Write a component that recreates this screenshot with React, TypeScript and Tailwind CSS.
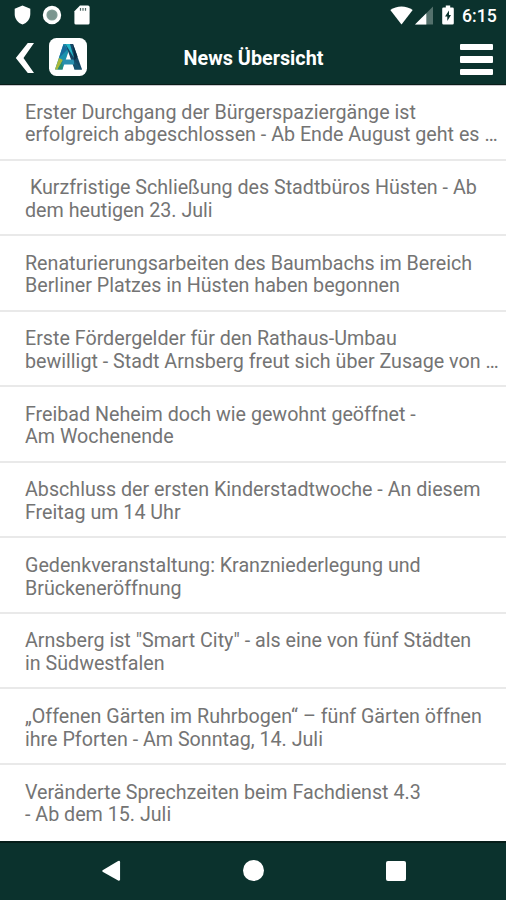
interface NewsItem {
    first: string;
    second: string;
}

const news: NewsItem[] = [
    { first: 'Erster Durchgang der Bürgerspaziergänge ist', second: 'erfolgreich abgeschlossen - Ab Ende August geht es …' },
    { first: ' Kurzfristige Schließung des Stadtbüros Hüsten - Ab', second: 'dem heutigen 23. Juli' },
    { first: 'Renaturierungsarbeiten des Baumbachs im Bereich', second: 'Berliner Platzes in Hüsten haben begonnen' },
    { first: 'Erste Fördergelder für den Rathaus-Umbau', second: 'bewilligt - Stadt Arnsberg freut sich über Zusage von …' },
    { first: 'Freibad Neheim doch wie gewohnt geöffnet -', second: 'Am Wochenende' },
    { first: 'Abschluss der ersten Kinderstadtwoche - An diesem', second: 'Freitag um 14 Uhr' },
    { first: 'Gedenkveranstaltung: Kranzniederlegung und', second: 'Brückeneröffnung' },
    { first: 'Arnsberg ist "Smart City" - als eine von fünf Städten', second: 'in Südwestfalen' },
    { first: '„Offenen Gärten im Ruhrbogen“ – fünf Gärten öffnen', second: 'ihre Pforten - Am Sonntag, 14. Juli' },
    { first: 'Veränderte Sprechzeiten beim Fachdienst 4.3', second: '- Ab dem 15. Juli' },
];

function StatusBar() {
    return (
        <div className="flex h-[30px] items-center justify-between pl-[14px] pr-[9px]">
            <div className="flex items-center">
                <svg className="h-[20px] w-[17px]" viewBox="0 0 17 20" fill="#fff">
                    <path d="M8.5 0.5 16.3 3.8V9c0 5-3.2 9-7.8 10.5C3.9 18 .7 14 .7 9V3.8Z" />
                </svg>
                <svg className="ml-[11px] h-[20px] w-[20px]" viewBox="0 0 20 20">
                    <circle cx="10" cy="10" r="7.4" fill="#85a09a" stroke="#fff" strokeWidth="3.6" />
                    <circle cx="10" cy="10" r="4.6" fill="#7b9690" />
                </svg>
                <svg className="ml-[12px] h-[20px] w-[16px]" viewBox="0 0 16 20">
                    <path d="M6 .5h8a1.6 1.6 0 0 1 1.6 1.6v15.8a1.6 1.6 0 0 1-1.6 1.6H2a1.6 1.6 0 0 1-1.6-1.6V6.2Z" fill="#fff" />
                    <path d="M6.5 3v2.8M9 3v2.8M11.5 3v2.8" stroke="#4d6662" strokeWidth="1.2" />
                </svg>
            </div>
            <div className="flex items-center">
                <svg className="h-[19px] w-[23px]" viewBox="0 0 23 19" fill="#fff">
                    <path d="M.3 4C6.5-.7 16.5-.7 22.7 4L11.5 18.5Z" />
                </svg>
                <svg className="ml-[2px] h-[19px] w-[18px]" viewBox="0 0 18 19">
                    <path d="M18 .5V18.5H0Z" fill="#54716c" />
                    <path d="M11.3 7.2V18.5H0Z" fill="#fff" />
                </svg>
                <svg className="ml-[9px] h-[20px] w-[12px]" viewBox="0 0 12 20">
                    <path d="M3.8 .5h4.4v2H10.5q1.3 0 1.3 1.3v14.4q0 1.3-1.3 1.3h-9Q.2 19.5.2 18.2V3.8Q.2 2.5 1.5 2.5h2.3Z" fill="#fff" />
                    <path d="M7 5.5 3 11.5h2.3v4.5L9 10H7Z" fill="#0b322d" />
                </svg>
                <span className="ml-[8px] w-[35px] whitespace-nowrap pt-px text-[17.7px] font-medium leading-[30px]">6:15</span>
            </div>
        </div>
    );
}

function ArnsbergLogo() {
    return (
        <svg className="h-[38px] w-[38px]" viewBox="0 0 38 38">
            <rect width="38" height="38" rx="7.5" fill="#fff" />
            <path d="M14.5 6h7.5L13.5 31.5H6Z" fill="#1a91ad" />
            <path d="M14.5 6 18.5 11.5 10 20Z" fill="#176b9c" />
            <path d="M10 20 14 22 8.5 31.5H6Z" fill="#a9b83a" />
            <path d="M14 22 13.5 31.5H8.5Z" fill="#298b70" />
            <path d="M16.5 6H24L33 31.5h-7.5Z" fill="#164665" />
            <path d="M16.5 6H21L25 20Z" fill="#23b5c8" />
            <path d="M24 6 28.5 18.5 25.5 22.5Z" fill="#092c42" />
            <path d="M14 21.5h10.5l1.5 5H13Z" fill="#2a8fb0" />
            <path d="M25 22 33 31.5h-7.5Z" fill="#155371" />
        </svg>
    );
}

function AppHeader() {
    return (
        <div className="flex h-[54px] items-center justify-between pl-[15px] pr-[13px]">
            <div className="flex w-[90px] items-center">
                <svg className="mt-px h-[32px] w-[20px]" viewBox="0 0 20 32" fill="#fff">
                    <path d="M12.8 1h6.2L8.5 16 19 31h-6.2L.8 16Z" />
                </svg>
                <span className="ml-[14px]">
                    <ArnsbergLogo />
                </span>
            </div>
            <h1 className="-ml-px whitespace-nowrap pt-[4px] text-[19.8px] font-bold leading-[24px]">News Übersicht</h1>
            <div className="flex w-[90px] justify-end">
                <div className="mt-[5px] flex w-[33px] flex-col gap-[6px]">
                    <span className="h-[6px] rounded-[1px] bg-white" />
                    <span className="h-[7px] rounded-[1px] bg-white" />
                    <span className="h-[6px] rounded-[1px] bg-white" />
                </div>
            </div>
        </div>
    );
}

function NavigationBar() {
    return (
        <div className="flex h-[59px] border-t-2 border-[#061d19] bg-[#0b322d] pl-[102px] pt-[17px]">
            <svg className="h-[22px] w-[19px]" viewBox="0 0 20 22" fill="#fff">
                <path d="M.6 10.3 17 .5q2-.8 2 1.3v18q0 2.1-2 1.3L.6 11.7Q0 11 .6 10.3Z" />
            </svg>
            <span className="ml-[122px] h-[21px] w-[21px] rounded-full bg-white" />
            <span className="ml-[122px] mt-px h-[20px] w-[20px] rounded-[2px] bg-white" />
        </div>
    );
}

export default function App() {
    return (
        <div className="flex h-[900px] w-[506px] flex-col overflow-hidden bg-white font-['Roboto','Noto_Sans',sans-serif]">
            <header className="h-[85px] border-b border-[#091c18] bg-[#0b322d] text-white">
                <StatusBar />
                <AppHeader />
            </header>
            <ul className="h-[756px] border-t border-[#c9c9ce]">
                {news.map((item) => (
                    <li
                        key={item.first}
                        className="group h-[75.55px] whitespace-pre text-[19.68px] leading-[22.7px] text-[#747474]"
                    >
                        <div className="h-[74.5px] border-b-2 border-[#e9e9e9] pl-[25px] pt-[15.6px] group-last:border-b-0">
                            <p>{item.first}</p>
                            <p>{item.second}</p>
                        </div>
                    </li>
                ))}
            </ul>
            <NavigationBar />
        </div>
    );
}
